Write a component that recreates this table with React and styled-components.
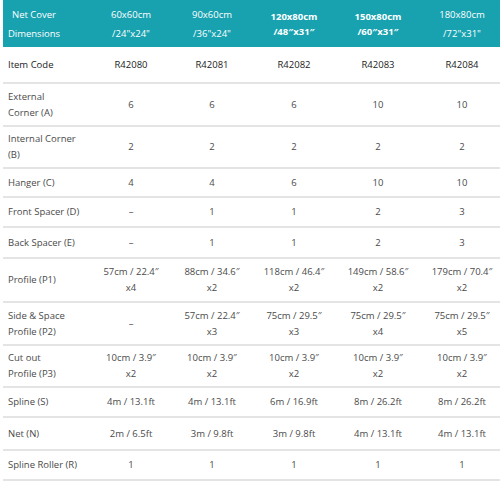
import React from 'react';
import styled, { createGlobalStyle } from 'styled-components';

const GlobalStyle = createGlobalStyle`
  html, body {
    margin: 0;
    padding: 0;
    background: #fff;
    overflow: hidden;
  }
  body {
    font-family: 'Open Sans', 'Liberation Sans', sans-serif;
  }
`;

const sizes = [
  { cm: '60x60cm', inch: '/24"x24"', code: 'R42080' },
  { cm: '90x60cm', inch: '/36"x24"', code: 'R42081' },
  { cm: '120x80cm', inch: '/48\u2033x31\u2033', code: 'R42082', bold: true },
  { cm: '150x80cm', inch: '/60\u2033x31\u2033', code: 'R42083', bold: true },
  { cm: '180x80cm', inch: '/72"x31"', code: 'R42084' },
];

const rows = [
  { label: ['External', 'Corner (A)'], h: 43, values: ['6', '6', '6', '10', '10'] },
  { label: ['Internal Corner', '(B)'], h: 42, values: ['2', '2', '2', '2', '2'] },
  { label: ['Hanger (C)'], h: 29, values: ['4', '4', '6', '10', '10'] },
  { label: ['Front Spacer (D)'], h: 30, values: ['\u2013', '1', '1', '2', '3'] },
  { label: ['Back Spacer (E)'], h: 31, values: ['\u2013', '1', '1', '2', '3'] },
  {
    label: ['Profile (P1)'],
    h: 44,
    values: [
      ['57cm / 22.4\u2033', 'x4'],
      ['88cm / 34.6\u2033', 'x2'],
      ['118cm / 46.4\u2033', 'x2'],
      ['149cm / 58.6\u2033', 'x2'],
      ['179cm / 70.4\u2033', 'x2'],
    ],
  },
  {
    label: ['Side & Space', 'Profile (P2)'],
    h: 43,
    values: [
      '\u2013',
      ['57cm / 22.4\u2033', 'x3'],
      ['75cm / 29.5\u2033', 'x3'],
      ['75cm / 29.5\u2033', 'x4'],
      ['75cm / 29.5\u2033', 'x5'],
    ],
  },
  {
    label: ['Cut out', 'Profile (P3)'],
    h: 42,
    values: [
      ['10cm / 3.9\u2033', 'x2'],
      ['10cm / 3.9\u2033', 'x2'],
      ['10cm / 3.9\u2033', 'x2'],
      ['10cm / 3.9\u2033', 'x2'],
      ['10cm / 3.9\u2033', 'x2'],
    ],
  },
  { label: ['Spline (S)'], h: 30, values: ['4m / 13.1ft', '4m / 13.1ft', '6m / 16.9ft', '8m / 26.2ft', '8m / 26.2ft'] },
  { label: ['Net (N)'], h: 33, values: ['2m / 6.5ft', '3m / 9.8ft', '3m / 9.8ft', '4m / 13.1ft', '4m / 13.1ft'] },
  { label: ['Spline Roller (R)'], h: 30, values: ['1', '1', '1', '1', '1'] },
];

const colWidths = [87, 82, 80, 84, 84, 84];

const Wrap = styled.div`
  padding-left: 3px;
  overflow: hidden;
`;

const Table = styled.table`
  width: 501px;
  border-collapse: collapse;
  table-layout: fixed;
  font-size: 9.5px;
  color: #444;
`;

const HeadRow = styled.tr`
  height: 47px;
  background: #18a2b0;
  color: #fff;
`;

const HeadCell = styled.th`
  padding: 0;
  font-weight: ${(p) => (p.$bold ? 700 : 400)};
  line-height: ${(p) => (p.$bold ? '15px' : '19px')};
  text-align: ${(p) => (p.$left ? 'left' : 'center')};
  vertical-align: middle;
`;

const HeadLabel = styled.span`
  display: inline-block;
  width: 62px;
  text-align: center;
`;

const Row = styled.tr`
  height: ${(p) => p.$h}px;
  border-bottom: 2px solid #e4e4e4;
`;

const LabelCell = styled.td`
  padding: 0 0 0 5px;
  line-height: 16px;
  text-align: left;
  vertical-align: middle;
  color: ${(p) => (p.$dark ? '#222' : '#4a4a4a')};
`;

const ValueCell = styled.td`
  padding: 0;
  line-height: 16px;
  text-align: center;
  vertical-align: middle;
  white-space: nowrap;
  color: ${(p) => (p.$dark ? '#222' : '#4a4a4a')};
`;

const Lines = ({ text }) => {
  const parts = Array.isArray(text) ? text : [text];
  return parts.map((t, i) => (
    <React.Fragment key={i}>
      {i > 0 && <br />}
      {t}
    </React.Fragment>
  ));
};

export default function App() {
  return (
    <>
      <GlobalStyle />
      <Wrap>
        <Table>
          <colgroup>
            {colWidths.map((w, i) => (
              <col key={i} style={{ width: w }} />
            ))}
          </colgroup>
          <thead>
            <HeadRow>
              <HeadCell $left>
                <HeadLabel>
                  Net Cover
                  <br />
                  Dimensions
                </HeadLabel>
              </HeadCell>
              {sizes.map((s) => (
                <HeadCell key={s.code} $bold={s.bold}>
                  {s.cm}
                  <br />
                  {s.inch}
                </HeadCell>
              ))}
            </HeadRow>
          </thead>
          <tbody>
            <Row $h={36}>
              <LabelCell $dark>Item Code</LabelCell>
              {sizes.map((s) => (
                <ValueCell key={s.code} $dark>
                  {s.code}
                </ValueCell>
              ))}
            </Row>
            {rows.map((r) => (
              <Row key={r.label.join(' ')} $h={r.h}>
                <LabelCell>
                  <Lines text={r.label} />
                </LabelCell>
                {r.values.map((v, i) => (
                  <ValueCell key={i}>
                    <Lines text={v} />
                  </ValueCell>
                ))}
              </Row>
            ))}
          </tbody>
        </Table>
      </Wrap>
    </>
  );
}
